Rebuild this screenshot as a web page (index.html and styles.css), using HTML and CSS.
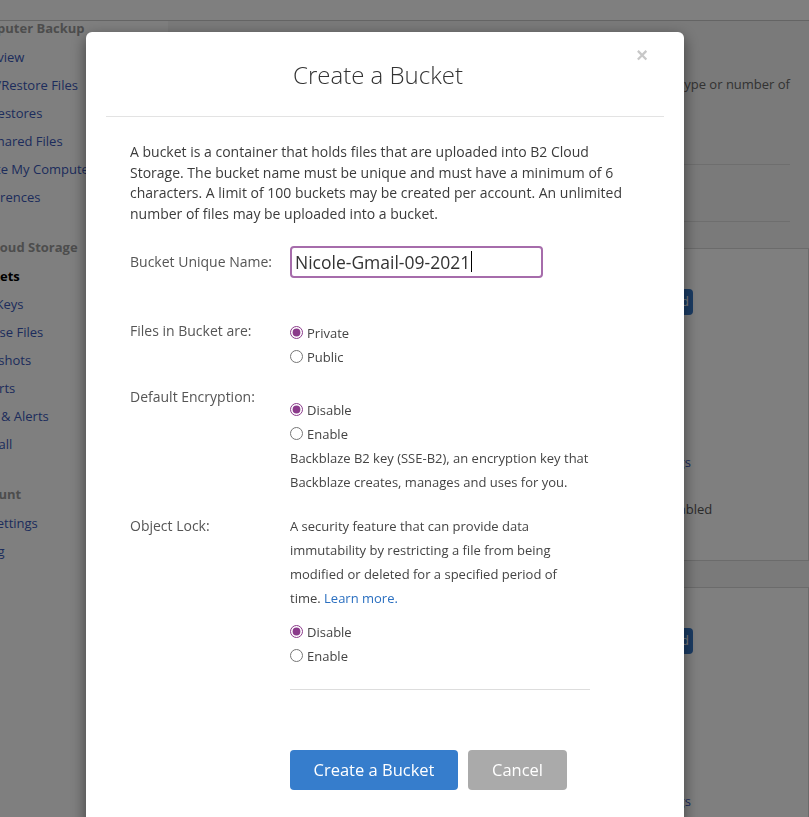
FILE: index.html
```html
<!DOCTYPE html>
<html>
<head>
  <meta charset="utf-8">
  <meta name="viewport" content="width=device-width, initial-scale=1">
  <title>Create a Bucket</title>
  <link rel="stylesheet" href="styles.css">
</head>
<body>
  <header class="topbar"></header>

  <div class="layout">
    <aside class="sidebar">
      <h4 class="nav-title">Computer Backup</h4>
      <ul class="nav-list">
        <li><a href="#">Overview</a></li>
        <li><a href="#">View/Restore Files</a></li>
        <li><a href="#">My Restores</a></li>
        <li><a href="#">My Shared Files</a></li>
        <li><a href="#">Locate My Computer</a></li>
        <li><a href="#">Preferences</a></li>
      </ul>
      <h4 class="nav-title">B2 Cloud Storage</h4>
      <ul class="nav-list">
        <li><a href="#" class="active">Buckets</a></li>
        <li><a href="#">App Keys</a></li>
        <li><a href="#">Browse Files</a></li>
        <li><a href="#">Snapshots</a></li>
        <li><a href="#">Reports</a></li>
        <li><a href="#">Caps &amp; Alerts</a></li>
        <li><a href="#">Fireball</a></li>
      </ul>
      <h4 class="nav-title">Account</h4>
      <ul class="nav-list">
        <li><a href="#">My Settings</a></li>
        <li><a href="#">Billing</a></li>
      </ul>
    </aside>

    <main class="content">
      <div class="intro">
        <p>There is no limit on the file type or number of</p>
      </div>
      <div class="toolbar"></div>

      <section class="panel">
        <div class="bucket-head">
          <h3 class="bucket-name">Nicole-Gmail-08-2021</h3>
          <a href="#" class="small-btn">Upload/Download</a>
        </div>
        <div class="details">
          <span>Bucket ID:</span><span></span>
          <span>Type: Private</span><span></span>
          <span>Created:</span><span></span>
          <span>Current Files: 0</span><span></span>
          <span>Current Size: 0 bytes</span><span></span>
          <span>Snapshots: 0</span><a href="#">Lifecycle Settings</a>
          <span>CORS Rules</span><span></span>
          <span>Object Lock</span><span>Encryption: Disabled</span>
        </div>
      </section>

      <section class="panel">
        <div class="bucket-head">
          <h3 class="bucket-name">Nicole-Gmail-07-2021</h3>
          <a href="#" class="small-btn">Upload/Download</a>
        </div>
        <div class="details">
          <span>Bucket ID:</span><span></span>
          <span>Type: Private</span><span></span>
          <span>Created:</span><span></span>
          <span>Current Files: 0</span><span></span>
          <span>Current Size: 0 bytes</span><span></span>
          <span>Snapshots: 0</span><a href="#">Lifecycle Settings</a>
        </div>
      </section>
    </main>
  </div>

  <div class="backdrop"></div>

  <div class="modal">
    <button class="close">&times;</button>
    <div class="modal-header">
      <h2 class="modal-title">Create a Bucket</h2>
    </div>
    <div class="modal-body">
      <p class="intro-text">A bucket is a container that holds files that are uploaded into B2 Cloud Storage. The bucket name must be unique and must have a minimum of 6 characters. A limit of 100 buckets may be created per account. An unlimited number of files may be uploaded into a bucket.</p>

      <div class="field field-name">
        <label class="field-label">Bucket Unique Name:</label>
        <div class="name-input">Nicole-Gmail-09-2021<span class="caret"></span></div>
      </div>

      <div class="field field-files">
        <label class="field-label">Files in Bucket are:</label>
        <div class="options">
          <label class="option"><input type="radio" name="type" checked>Private</label>
          <label class="option"><input type="radio" name="type">Public</label>
        </div>
      </div>

      <div class="field field-enc">
        <label class="field-label">Default Encryption:</label>
        <div class="options">
          <label class="option"><input type="radio" name="enc" checked>Disable</label>
          <label class="option"><input type="radio" name="enc">Enable</label>
          <p class="note">Backblaze B2 key (SSE-B2), an encryption key that Backblaze creates, manages and uses for you.</p>
        </div>
      </div>

      <div class="field field-lock">
        <label class="field-label">Object Lock:</label>
        <div class="options">
          <p class="note">A security feature that can provide data immutability by restricting a file from being modified or deleted for a specified period of time. <a href="#">Learn more.</a></p>
          <div class="lock-options">
            <label class="option"><input type="radio" name="lock" checked>Disable</label>
            <label class="option"><input type="radio" name="lock">Enable</label>
          </div>
        </div>
      </div>

      <hr class="divider">

      <div class="actions">
        <button class="btn btn-primary">Create a Bucket</button>
        <button class="btn btn-muted">Cancel</button>
      </div>
    </div>
  </div>
</body>
</html>
```

FILE: styles.css
```css
* {
  box-sizing: border-box;
}

body {
  margin: 0;
  height: 817px;
  overflow: hidden;
  font-family: "Open Sans", "Liberation Sans", sans-serif;
  font-size: 13px;
  color: #666;
  background: #f4f4f4;
}

.topbar {
  height: 21px;
  background: #fff;
  border-bottom: 1px solid #c8c8c8;
}

.layout {
  display: flex;
}

/* sidebar is scrolled partly off the left edge */
.sidebar {
  flex-shrink: 0;
  width: 200px;
  min-height: 796px;
  margin-left: -32px;
  padding-right: 3px;
  background: #fff;
}

.nav-title {
  margin: 29px 0 8px;
  font-size: 13px;
  font-weight: bold;
  line-height: 14px;
  color: #9a9a9a;
}

.nav-title:first-child {
  margin-top: 0;
}

.nav-list {
  list-style: none;
  margin: 0;
  padding: 0;
}

.nav-list a {
  display: block;
  line-height: 28px;
  color: #3a58b8;
  text-decoration: none;
  white-space: nowrap;
}

.nav-list a.active {
  color: #000;
  font-weight: bold;
}

.content {
  flex: 1;
  margin-left: 3px;
  padding-right: 19px;
}

.intro {
  height: 144px;
  padding-top: 53px;
  border-bottom: 1px solid #dcdcdc;
}

.intro p {
  margin: 0;
  line-height: 20px;
  text-align: right;
  white-space: nowrap;
}

.toolbar {
  height: 57px;
  border-bottom: 1px solid #dcdcdc;
}

.panel {
  height: 313px;
  margin: 26px -19px 24px 20px;
  padding: 40px 0 0 19px;
  background: #fff;
  border: 1px solid #d6d6d6;
}

.bucket-head {
  display: flex;
  align-items: center;
}

.bucket-name {
  width: 372px;
  margin: 0;
  font-size: 16px;
  color: #333;
}

.small-btn {
  width: 110px;
  height: 26px;
  border-radius: 4px;
  background: #3778c8;
  color: #fff;
  text-decoration: none;
  font-size: 12px;
  line-height: 26px;
  text-align: center;
}

.details {
  display: grid;
  grid-template-columns: 377px auto;
  margin-top: 18px;
  line-height: 23.5px;
  color: #555;
}

.details a {
  color: #3a58b8;
  text-decoration: none;
}

.backdrop {
  position: fixed;
  inset: 0;
  background: rgba(0, 0, 0, 0.5);
}

.modal {
  position: fixed;
  top: 32px;
  left: 86px;
  width: 598px;
  height: 820px;
  background: #fff;
  border-radius: 6px;
  box-shadow: 0 5px 15px rgba(0, 0, 0, 0.5);
}

.close {
  position: absolute;
  top: 16px;
  right: 36px;
  padding: 0;
  border: 0;
  background: none;
  font-family: "Liberation Sans", sans-serif;
  font-size: 20px;
  font-weight: bold;
  line-height: 14px;
  color: #c8c8c8;
}

.modal-header {
  margin: 0 20px;
  padding: 28px 14px 26px 0;
  border-bottom: 1px solid #e3e3e3;
  text-align: center;
}

.modal-title {
  margin: 0;
  font-size: 24px;
  font-weight: 300;
  line-height: 30px;
  color: #333;
}

.modal-body {
  padding: 25px 44px 0;
}

.intro-text {
  margin: 0 0 21px;
  font-size: 14px;
  line-height: 20.7px;
  color: #3b3b3b;
}

.field {
  display: flex;
}

.field-label {
  flex-shrink: 0;
  width: 160px;
  font-size: 14px;
  line-height: 24px;
  color: #555;
}

.field-name {
  align-items: center;
}

.name-input {
  display: flex;
  align-items: center;
  width: 253px;
  height: 32px;
  padding: 0 3px;
  border: 2px solid #a66cab;
  border-radius: 4px;
  font-size: 17.5px;
  color: #333;
}

.caret {
  width: 1px;
  height: 21px;
  margin-left: 1px;
  background: #000;
}

.field-files {
  margin-top: 41px;
}

.field-files .options {
  padding-top: 2px;
}

.field-enc {
  margin-top: 16px;
}

.field-enc .options {
  padding-top: 13px;
}

.field-lock {
  margin-top: 20px;
}

.option {
  display: flex;
  align-items: center;
  line-height: 24px;
  color: #444;
}

.option input {
  width: 13px;
  height: 13px;
  margin: 0 4px 0 0;
  accent-color: #8b3a8b;
}

.note {
  width: 299px;
  margin: 0;
  line-height: 24px;
  color: #444;
}

.note a {
  color: #2a6fc0;
  text-decoration: none;
}

.lock-options {
  margin-top: 10px;
}

.divider {
  width: 300px;
  margin: 21px 0 0 160px;
  border: 0;
  border-top: 1px solid #ddd;
}

.actions {
  display: flex;
  gap: 10px;
  margin: 60px 0 0 160px;
}

.btn {
  height: 40px;
  padding: 0;
  border: 0;
  border-radius: 4px;
  font-family: inherit;
  font-size: 16.5px;
  color: #fff;
}

.btn-primary {
  width: 168px;
  background: #367dcc;
}

.btn-muted {
  width: 99px;
  background: #aaa;
}
```
